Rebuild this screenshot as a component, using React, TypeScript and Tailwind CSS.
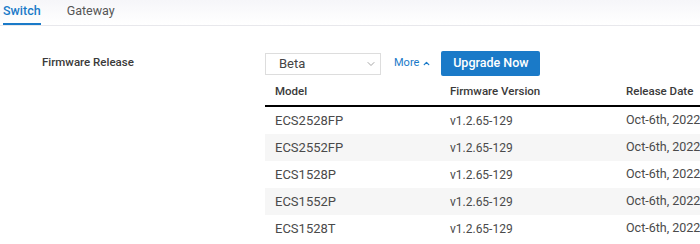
import { ChevronDown, ChevronUp } from "lucide-react";

const rows = [
  { model: "ECS2528FP", version: "v1.2.65-129", date: "Oct-6th, 2022" },
  { model: "ECS2552FP", version: "v1.2.65-129", date: "Oct-6th, 2022" },
  { model: "ECS1528P", version: "v1.2.65-129", date: "Oct-6th, 2022" },
  { model: "ECS1552P", version: "v1.2.65-129", date: "Oct-6th, 2022" },
  { model: "ECS1528T", version: "v1.2.65-129", date: "Oct-6th, 2022" },
];

export default function App() {
  return (
    <div className="h-[244px] w-[700px] overflow-hidden bg-white font-['Roboto',sans-serif] text-[13px] text-[#4a4a4a]">
      {/* tabs */}
      <div className="flex h-[26px] items-end gap-[26px] border-b border-[#e8e8ec] bg-gradient-to-b from-[#f6f6f9] to-white pl-[3px]">
        <div className="border-b-2 border-[#1a7ac8] pb-[3px] text-[12.5px] font-medium leading-[18px] text-[#1a7ac8]">
          Switch
        </div>
        <div className="pb-[5px] text-[12.5px] leading-[18px] text-[#555]">Gateway</div>
      </div>

      <div className="flex pt-[25px]">
        <div className="w-[265px] shrink-0 pl-[42px] pt-[2px] text-[11.5px] font-medium leading-[18px] whitespace-nowrap text-[#3a3a3a]">
          Firmware Release
        </div>

        <div className="w-[435px] shrink-0 whitespace-nowrap">
          <div className="flex h-[25px] items-center">
            <div className="flex h-[22px] w-[116px] items-center justify-between border border-[#ddd] pr-[3px] pl-[13px] text-[13px] text-[#444]">
              <span>Beta</span>
              <ChevronDown className="h-3 w-3 text-[#888]" strokeWidth={1.5} />
            </div>
            <div className="ml-[13px] flex items-center gap-[3px] text-[11px] text-[#1a7ac8]">
              More
              <ChevronUp className="h-[9px] w-[9px]" strokeWidth={3.5} />
            </div>
            <button className="ml-[10px] h-[25px] w-[99px] rounded-[2px] bg-[#1a7ac8] text-[12.5px] font-medium text-white">
              Upgrade Now
            </button>
          </div>

          <div className="mt-[2px] flex h-[29px] items-center border-b-2 border-black text-[11.5px] font-medium text-[#3a3a3a]">
            <div className="w-[175px] shrink-0 pl-[10px]">Model</div>
            <div className="w-[176px] shrink-0 pl-[10px]">Firmware Version</div>
            <div className="flex-1 pl-[10px]">Release Date</div>
          </div>

          {rows.map((r, i) => (
            <div
              key={r.model}
              className={`flex h-[27px] items-center ${i % 2 === 1 ? "bg-[#f6f6f6]" : "bg-white"}`}
            >
              <div className="w-[175px] shrink-0 pl-[10px]">{r.model}</div>
              <div className="w-[176px] shrink-0 pl-[10px] text-[12px]">{r.version}</div>
              <div className="flex-1 pl-[10px] text-[12.5px]">{r.date}</div>
            </div>
          ))}
        </div>
      </div>
    </div>
  );
}
